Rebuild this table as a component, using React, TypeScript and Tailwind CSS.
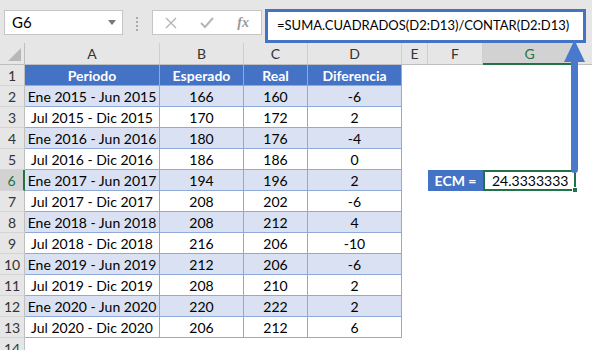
import { ReactNode } from 'react';

const rows: [string, number, number, number][] = [
  ['Ene 2015 - Jun 2015', 166, 160, -6],
  ['Jul 2015 - Dic 2015', 170, 172, 2],
  ['Ene 2016 - Jun 2016', 180, 176, -4],
  ['Jul 2016 - Dic 2016', 186, 186, 0],
  ['Ene 2017 - Jun 2017', 194, 196, 2],
  ['Jul 2017 - Dic 2017', 208, 202, -6],
  ['Ene 2018 - Jun 2018', 208, 212, 4],
  ['Jul 2018 - Dic 2018', 216, 206, -10],
  ['Ene 2019 - Jun 2019', 212, 206, -6],
  ['Jul 2019 - Dic 2019', 208, 210, 2],
  ['Ene 2020 - Jun 2020', 220, 222, 2],
  ['Jul 2020 - Dic 2020', 206, 212, 6],
];

const font = { fontFamily: 'Lato, "Liberation Sans", sans-serif' };

function RowHead({ n, active }: { n: number; active?: boolean }) {
  return (
    <div
      className={`w-[25px] shrink-0 flex items-center justify-center text-[14px] border-b border-[#d4d4d4] overflow-hidden ${
        active
          ? 'bg-[#d2d2d2] text-[#217346] border-r-2 border-r-[#217346]'
          : 'bg-[#e6e6e6] text-[#333] border-r border-r-[#bfbfbf]'
      }`}
    >
      {n}
    </div>
  );
}

function Cell({ w, children, className = '' }: { w: string; children?: ReactNode; className?: string }) {
  return (
    <div className={`${w} shrink-0 flex items-center justify-center whitespace-nowrap ${className}`}>{children}</div>
  );
}

export default function App() {
  return (
    <div className="w-[592px] h-[350px] overflow-hidden bg-white relative text-black" style={font}>
      {/* formula bar */}
      <div className="h-[43px] bg-[#e6e6e6] flex items-start pt-[9px]">
        <div className="ml-[4px] mt-[1px] w-[119px] h-[25px] bg-white border border-[#c6c6c6] flex items-center pl-[7px] pr-[6px] text-[15px]">
          <span className="flex-1">G6</span>
          <span className="w-0 h-0 border-l-[4px] border-r-[4px] border-t-[5px] border-l-transparent border-r-transparent border-t-[#777]" />
        </div>
        <div className="ml-[13px] mt-[8px] flex flex-col gap-[2px]">
          <span className="w-[2px] h-[2px] bg-[#aaa]" />
          <span className="w-[2px] h-[2px] bg-[#aaa]" />
          <span className="w-[2px] h-[2px] bg-[#aaa]" />
          <span className="w-[2px] h-[2px] bg-[#aaa]" />
        </div>
        <div className="ml-[14px] mt-[1px] w-[110px] h-[25px] bg-white border border-[#c6c6c6] flex items-center px-[12px] justify-between">
          <svg width="12" height="12" viewBox="0 0 12 12" stroke="#b5b5b5" strokeWidth="1.4">
            <path d="M1 1 L11 11 M11 1 L1 11" />
          </svg>
          <svg width="14" height="12" viewBox="0 0 14 12" fill="none" stroke="#b5b5b5" strokeWidth="2">
            <path d="M1 6 L5 10 L13 1" />
          </svg>
          <span className="italic font-bold text-[14px] text-[#999]" style={{ fontFamily: '"Liberation Serif", serif' }}>
            fx
          </span>
        </div>
        <div className="ml-[3px] w-[321px] h-[34px] bg-white border-[3px] border-[#4472c4] flex items-center pl-[9px] text-[13px] whitespace-nowrap">
          =SUMA.CUADRADOS(D2:D13)/CONTAR(D2:D13)
        </div>
      </div>

      {/* column headers */}
      <div className="flex h-[22px] bg-[#e6e6e6] text-[14px] text-[#333] border-b border-[#bfbfbf]">
        <div className="w-[25px] shrink-0 relative border-r border-[#bfbfbf]">
          <svg className="absolute right-[3px] bottom-[3px]" width="13" height="13" viewBox="0 0 13 13">
            <path d="M13 0 L13 13 L0 13 Z" fill="#b7b7b7" />
          </svg>
        </div>
        <Cell w="w-[135px]" className="border-r border-[#cfcfcf]">A</Cell>
        <Cell w="w-[84px]" className="border-r border-[#cfcfcf]">B</Cell>
        <Cell w="w-[64px]" className="border-r border-[#cfcfcf]">C</Cell>
        <Cell w="w-[94px]" className="border-r border-[#cfcfcf]">D</Cell>
        <Cell w="w-[26px]" className="border-r border-[#cfcfcf]">E</Cell>
        <Cell w="w-[55px]" className="border-r border-[#cfcfcf]">F</Cell>
        <Cell w="w-[93px]" className="bg-[#d2d2d2] text-[#217346] border-b-2 border-[#217346] -mb-px">
          G
        </Cell>
        <div className="flex-1" />
      </div>

      {/* table header row */}
      <div className="flex h-[21px] text-[14px]">
        <RowHead n={1} />
        <Cell w="w-[135px]" className="bg-[#4472c4] text-white font-bold border-r border-b border-[#8eaadb]">
          Periodo
        </Cell>
        <Cell w="w-[84px]" className="bg-[#4472c4] text-white font-bold border-r border-b border-[#8eaadb]">
          Esperado
        </Cell>
        <Cell w="w-[64px]" className="bg-[#4472c4] text-white font-bold border-r border-b border-[#8eaadb]">
          Real
        </Cell>
        <Cell w="w-[94px]" className="bg-[#4472c4] text-white font-bold border-r border-b border-[#8eaadb]">
          Diferencia
        </Cell>
      </div>

      {rows.map(([period, esp, real, diff], i) => {
        const n = i + 2;
        const fill = n % 2 === 0 ? 'bg-[#d9e1f2]' : 'bg-white';
        const cell = `${fill} border-r border-b border-[#8eaadb]`;
        return (
          <div key={n} className="flex h-[21px] text-[14px]">
            <RowHead n={n} active={n === 6} />
            <Cell w="w-[135px]" className={cell}>{period}</Cell>
            <Cell w="w-[84px]" className={cell}>{esp}</Cell>
            <Cell w="w-[64px]" className={cell}>{real}</Cell>
            <Cell w="w-[94px]" className={cell}>{diff}</Cell>
            {n === 6 && (
              <>
                <Cell w="w-[26px]" />
                <Cell w="w-[55px]" className="bg-[#4472c4] text-white font-bold">
                  ECM =
                </Cell>
                <div className="w-[93px] shrink-0 relative border-2 border-[#217346] flex items-center pl-[7px]">
                  24.3333333
                  <span className="absolute -right-[4px] -bottom-[4px] w-[6px] h-[6px] bg-[#217346] border border-white" />
                </div>
              </>
            )}
          </div>
        );
      })}

      <div className="flex h-[21px] text-[14px]">
        <RowHead n={14} />
      </div>

      {/* arrow from G6 up to the formula bar */}
      <svg className="absolute left-[562px] top-[39px]" width="26" height="137" viewBox="0 0 26 137">
        <rect x="9" y="18" width="7" height="116" rx="3.5" fill="#4a79cc" />
        <path d="M12.5 1 L23 23 L2 23 Z" fill="#4a79cc" />
      </svg>
    </div>
  );
}
